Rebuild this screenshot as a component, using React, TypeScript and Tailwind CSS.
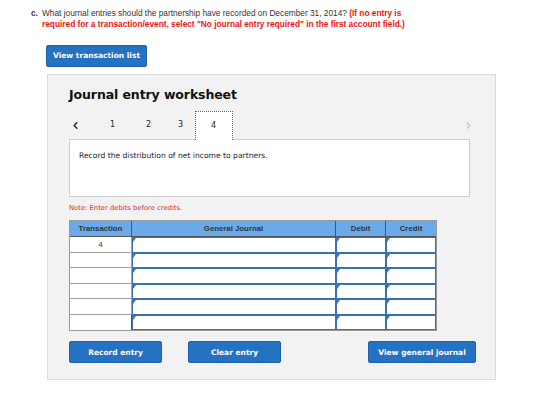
import React from 'react';
import { ChevronLeft, ChevronRight } from 'lucide-react';

const rows = ['4', '', '', '', '', ''];

function InputCell() {
  return (
    <div className="relative h-full w-full border border-[#3a70ad] bg-white">
      <span className="absolute left-0 top-0 h-0 w-0 border-t-[4px] border-r-[3px] border-t-[#2f79c9] border-r-transparent" />
    </div>
  );
}

function BlueButton({ label, w }: { label: string; w: string }) {
  return (
    <button
      className={`${w} block h-[22px] rounded-[2px] bg-[#2672c2] text-[7.5px] font-bold text-white border border-[#1f63ab]`}
      style={{ fontFamily: '"DejaVu Sans", Verdana, sans-serif' }}
    >
      {label}
    </button>
  );
}

export default function App() {
  return (
    <div className="w-[560px] h-[407px] bg-white overflow-hidden" style={{ fontFamily: '"Liberation Sans", Arial, sans-serif' }}>
      {/* Question */}
      <div className="flex pl-[31px] pt-[8px] text-[8.3px] leading-[11px] text-[#333]">
        <span className="w-[11px] font-bold">c.</span>
        <p className="w-[365px]">
          What journal entries should the partnership have recorded on December 31, 2014?{' '}
          <span className="font-bold text-[#ef1111]">
            (If no entry is required for a transaction/event, select "No journal entry required" in the first account field.)
          </span>
        </p>
      </div>

      <div className="ml-[46px] mt-[15px]">
        <BlueButton label="View transaction list" w="w-[101px]" />
      </div>

      {/* Worksheet panel */}
      <div
        className="ml-[47px] mt-[7px] w-[449px] h-[306px] bg-[#f2f2f2] border border-[#dcdcdc] px-[21px] pt-[12px]"
        style={{ fontFamily: '"DejaVu Sans", Verdana, sans-serif' }}
      >
        <h2 className="text-[12.5px] font-bold text-[#111] leading-[16px] tracking-[-0.1px]">Journal entry worksheet</h2>

        {/* Tabs */}
        <div className="mt-[8px] flex w-[401px] items-end h-[28px] relative z-10">
          <span className="w-[36px] pl-[1px] self-center text-[#222]">
            <ChevronLeft size={11} strokeWidth={3} />
          </span>
          <span className="w-[35px] pl-[5px] self-center text-[8px] text-[#222]">1</span>
          <span className="w-[34px] pl-[6px] self-center text-[8px] text-[#222]">2</span>
          <span className="w-[21px] pl-[4px] self-center text-[8px] text-[#222]">3</span>
          <div className="-mb-px h-[29px] w-[38px] border border-b-0 border-dotted border-[#2f6fc4] bg-white flex items-center pl-[15px] text-[8px] text-[#222]">
            4
          </div>
          <span className="ml-auto mr-[-4px] self-center text-[#9a9a9a]">
            <ChevronRight size={11} strokeWidth={2} />
          </span>
        </div>

        {/* Description */}
        <div className="w-[401px] h-[58px] border border-[#cfcfcf] bg-white px-[9px] pt-[10px] text-[7.6px] text-[#222]">
          Record the distribution of net income to partners.
        </div>

        <p className="mt-[6px] text-[6.8px] text-[#d3302f]">Note: Enter debits before credits.</p>

        {/* Table */}
        <div className="mt-[7px] w-[368px] border border-[#9a9a9a]" style={{ fontFamily: '"Liberation Sans", Arial, sans-serif' }}>
          <div className="grid grid-cols-[62px_204px_50px_1fr] h-[16px] bg-[#6aaae8] text-[7.8px] font-bold text-[#333] border-b border-[#555]">
            <div className="flex items-center justify-center border-r border-[#555]">Transaction</div>
            <div className="flex items-center justify-center border-r border-[#555]">General Journal</div>
            <div className="flex items-center justify-center border-r border-[#555]">Debit</div>
            <div className="flex items-center justify-center">Credit</div>
          </div>
          {rows.map((r, i) => (
            <div key={i} className="grid grid-cols-[62px_204px_50px_1fr] h-[15.5px] bg-white">
              <div className={`flex items-center justify-center border-r border-[#555] text-[7.5px] text-[#333] ${i < rows.length - 1 ? 'border-b border-[#a0a0a0]' : ''}`}>
                {r}
              </div>
              <InputCell />
              <InputCell />
              <InputCell />
            </div>
          ))}
        </div>

        {/* Bottom buttons */}
        <div className="mt-[10px] flex w-[407px] items-center">
          <BlueButton label="Record entry" w="w-[93px]" />
          <div className="ml-[26px] flex">
            <BlueButton label="Clear entry" w="w-[93px]" />
          </div>
          <div className="ml-auto flex">
            <BlueButton label="View general journal" w="w-[108px]" />
          </div>
        </div>
      </div>
    </div>
  );
}
